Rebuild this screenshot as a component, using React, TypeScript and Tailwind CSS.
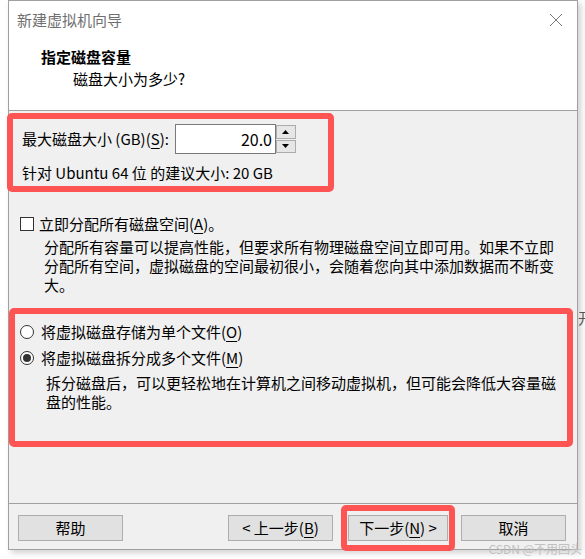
import React from "react";

const font = { fontFamily: '"Noto Sans CJK SC", "Noto Sans", sans-serif' };

const U = ({ children }: { children: React.ReactNode }) => (
  <span className="underline underline-offset-[3px] decoration-1">{children}</span>
);

const Btn = ({ children, w = "w-[105px]" }: { children: React.ReactNode; w?: string }) => (
  <div
    className={`${w} h-[26px] flex items-center justify-center bg-[#e1e1e1] border border-[#adadad] text-[15px] leading-[20px] text-black`}
  >
    {children}
  </div>
);

const Radio = ({ checked }: { checked?: boolean }) => (
  <div className="w-[14px] h-[14px] rounded-full border border-[#333] bg-white flex items-center justify-center">
    {checked && <div className="w-[8px] h-[8px] rounded-full bg-[#333]" />}
  </div>
);

const App = () => {
  return (
    <div className="w-[585px] h-[559px] bg-white flex overflow-hidden relative text-black" style={font}>
      <div className="ml-[8px] w-[570px] h-[550px] flex flex-col border border-[#a0a0a0] bg-[#f0f0f0] shadow-[3px_3px_6px_rgba(0,0,0,0.18)]">
        {/* header */}
        <div className="h-[110px] bg-white border-b border-[#a0a0a0] text-[15px] leading-[20px]">
          <div className="h-[38px] flex items-center justify-between pl-[8px] pr-[14px]">
            <span className="text-[#6f6f6f]">新建虚拟机向导</span>
            <svg width="14" height="14" viewBox="0 0 14 14">
              <path d="M1 1 L13 13 M13 1 L1 13" stroke="#7a7a7a" strokeWidth="1" fill="none" />
            </svg>
          </div>
          <div className="mt-[8px] pl-[32px] font-bold">指定磁盘容量</div>
          <div className="mt-[2px] pl-[64px]">磁盘大小为多少?</div>
        </div>

        {/* body */}
        <div className="flex-1 flex flex-col text-[15px] leading-[20px]">
          <div className="mt-[2px] -ml-[2px] w-[327px] border-[6px] border-[#ff5454] rounded-[5px] pl-[9px] pt-[5px] pb-[3px]">
            <div className="flex items-center h-[30px]">
              <span>
                最大磁盘大小 (GB)(<U>S</U>):
              </span>
              <div className="ml-[6px] flex h-[30px]">
                <div className="w-[101px] h-[30px] border border-[#7a7a7a] bg-white flex items-center justify-end pr-[3px] text-[16px]">
                  20.0
                </div>
                <div className="w-[21px] h-[30px] flex flex-col py-[1px] pr-[1px] gap-[1px]">
                  <div className="flex-1 bg-[#e6e6e6] border border-[#acacac] flex items-center justify-center">
                    <svg width="7" height="4" viewBox="0 0 7 4">
                      <polygon points="3.5,0 7,4 0,4" fill="#000" />
                    </svg>
                  </div>
                  <div className="flex-1 bg-[#e6e6e6] border border-[#acacac] flex items-center justify-center">
                    <svg width="7" height="4" viewBox="0 0 7 4">
                      <polygon points="0,0 7,0 3.5,4" fill="#000" />
                    </svg>
                  </div>
                </div>
              </div>
            </div>
            <div className="mt-[9px]">针对 Ubuntu 64 位 的建议大小: 20 GB</div>
          </div>

          <div className="mt-[22px] pl-[11px] flex items-center gap-[5px]">
            <div className="w-[14px] h-[14px] border border-[#333] bg-white" />
            <span>
              立即分配所有磁盘空间(<U>A</U>)。
            </span>
          </div>
          <div className="mt-[3px] pl-[35px] leading-[19px]">
            <div>分配所有容量可以提高性能，但要求所有物理磁盘空间立即可用。如果不立即</div>
            <div>分配所有空间，虚拟磁盘的空间最初很小，会随着您向其中添加数据而不断变</div>
            <div>大。</div>
          </div>

          <div className="mt-[14px] w-[564px] border-[6px] border-[#ff5454] rounded-[5px] pl-[5px] pt-[8px] pb-[30px]">
            <div className="flex items-center gap-[7px] h-[20px]">
              <Radio />
              <span>
                将虚拟磁盘存储为单个文件(<U>O</U>)
              </span>
            </div>
            <div className="mt-[6px] flex items-center gap-[7px] h-[20px]">
              <Radio checked />
              <span>
                将虚拟磁盘拆分成多个文件(<U>M</U>)
              </span>
            </div>
            <div className="mt-[5px] pl-[26px] leading-[19px]">
              <div>拆分磁盘后，可以更轻松地在计算机之间移动虚拟机，但可能会降低大容量磁</div>
              <div>盘的性能。</div>
            </div>
          </div>
        </div>

        {/* footer */}
        <div className="h-[46px] border-t border-[#a0a0a0] flex items-start pt-[1px] pl-[9px] pr-[11px]">
          <div className="mt-[10px]">
            <Btn>帮助</Btn>
          </div>
          <div className="flex-1" />
          <div className="mt-[10px]">
            <Btn>
              &lt; 上一步(<U>B</U>)
            </Btn>
          </div>
          <div className="ml-[8px] border-[6px] border-[#ff5454] rounded-[5px] px-[1px] py-[4px]">
            <Btn w="w-[100px]">
              下一步(<U>N</U>) &gt;
            </Btn>
          </div>
          <div className="ml-[6px] mt-[10px]">
            <Btn>取消</Btn>
          </div>
        </div>
      </div>

      <div className="w-[7px] overflow-hidden pt-[308px] text-[15px] leading-[20px] text-[#555] whitespace-nowrap">开</div>

      <div className="absolute right-[3px] bottom-[2px] text-[12px] leading-[16px] text-[#bdbdbd] opacity-90">
        CSDN @不用回头
      </div>
    </div>
  );
};

export default App;
